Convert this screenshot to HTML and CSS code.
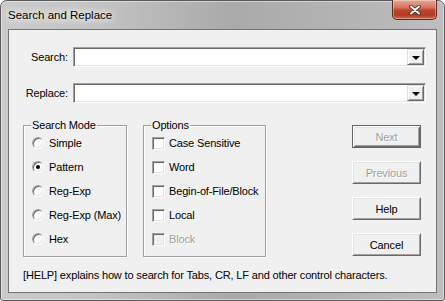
FILE: index.html
```html
<!DOCTYPE html>
<html lang="en">
<head>
    <meta charset="UTF-8">
    <title>Search and Replace</title>
    <link rel="stylesheet" href="styles.css">
</head>
<body>

    <div class="window">
        <!-- Title bar -->
        <div class="titlebar">
            <span class="title">Search and Replace</span>
            <button class="close-btn" aria-label="Close">
                <svg width="12" height="10" viewBox="0 0 12 10">
                    <path d="M2 1.5 L10 8.5 M10 1.5 L2 8.5" stroke="#3a2a2a" stroke-width="3.6" stroke-linecap="round" fill="none"/>
                    <path d="M2 1.5 L10 8.5 M10 1.5 L2 8.5" stroke="#fff" stroke-width="2" stroke-linecap="round" fill="none"/>
                </svg>
            </button>
        </div>

        <div class="client">
            <!-- Search / Replace fields -->
            <div class="field-row">
                <label class="field-label">Search:</label>
                <div class="combo"><span class="combo-arrow"><span class="tri"></span></span></div>
            </div>
            <div class="field-row">
                <label class="field-label">Replace:</label>
                <div class="combo"><span class="combo-arrow"><span class="tri"></span></span></div>
            </div>

            <div class="lower">
                <fieldset class="group group-mode">
                    <legend>Search Mode</legend>
                    <div class="option-list">
                        <div class="option"><span class="radio"></span>Simple</div>
                        <div class="option"><span class="radio checked"></span>Pattern</div>
                        <div class="option"><span class="radio"></span>Reg-Exp</div>
                        <div class="option"><span class="radio"></span>Reg-Exp (Max)</div>
                        <div class="option"><span class="radio"></span>Hex</div>
                    </div>
                </fieldset>

                <fieldset class="group group-options">
                    <legend>Options</legend>
                    <div class="option-list">
                        <div class="option"><span class="check"></span>Case Sensitive</div>
                        <div class="option"><span class="check"></span>Word</div>
                        <div class="option"><span class="check"></span>Begin-of-File/Block</div>
                        <div class="option"><span class="check"></span>Local</div>
                        <div class="option disabled"><span class="check"></span>Block</div>
                    </div>
                </fieldset>

                <div class="actions">
                    <button class="btn default" disabled>Next</button>
                    <button class="btn" disabled>Previous</button>
                    <button class="btn">Help</button>
                    <button class="btn">Cancel</button>
                </div>
            </div>

            <p class="hint">[HELP] explains how to search for Tabs, CR, LF and other control characters.</p>
        </div>
    </div>

</body>
</html>
```

FILE: styles.css
```css
/* Page */
body {
    margin: 0;
    font-family: "Liberation Sans", Arial, sans-serif;
    font-size: 11px;
    letter-spacing: -0.15px;
    color: #000;
}

/* Window frame */
.window {
    width: 445px;
    height: 301px;
    box-sizing: border-box;
    border: 1px solid #5a5a5a;
    border-radius: 7px 7px 3px 3px;
    padding: 0 7px 7px 7px;
    background: linear-gradient(90deg, #cacaca 0%, #c3c3c3 22%, #aaaaaa 52%, #b3b3b3 76%, #bebebe 100%);
    box-shadow: inset 0 0 0 1px rgba(255, 255, 255, 0.45);
}

.titlebar {
    height: 28px;
    display: flex;
    justify-content: space-between;
    align-items: flex-start;
}

.title {
    margin-top: 7px;
    font-size: 11.5px;
    letter-spacing: 0;
    line-height: 14px;
    color: #000;
    text-shadow: 0 0 6px #fff, 0 0 10px #fff, 0 0 14px rgba(255, 255, 255, 0.8);
}

.close-btn {
    width: 45px;
    height: 20px;
    margin-top: -1px;
    padding: 0;
    border: 1px solid #5b2a22;
    border-top: none;
    border-radius: 0 0 5px 5px;
    background: linear-gradient(#e4a897 0%, #d7735d 40%, #c0452d 52%, #b53a22 80%, #cf6a4f 100%);
    box-shadow: inset 0 0 0 1px rgba(255, 255, 255, 0.35);
    display: flex;
    align-items: center;
    justify-content: center;
}

/* Client area */
.client {
    height: 264px;
    box-sizing: border-box;
    border: 1px solid #737373;
    background-color: #f0f0f0;
    padding: 17px 10px 0 0;
}

/* Search / Replace rows */
.field-row {
    display: flex;
    align-items: center;
    gap: 5px;
    margin-bottom: 16px;
}

.field-label {
    width: 59px;
    text-align: right;
}

.combo {
    width: 354px;
    height: 20px;
    box-sizing: border-box;
    padding: 1px;
    border: 1px solid;
    border-color: #a0a0a0 #ffffff #ffffff #a0a0a0;
    box-shadow: inset 1px 1px #696969, inset -1px -1px #e3e3e3;
    background-color: #fff;
    display: flex;
    justify-content: flex-end;
}

.combo-arrow {
    width: 17px;
    height: 16px;
    box-sizing: border-box;
    border: 1px solid;
    border-color: #e3e3e3 #696969 #696969 #e3e3e3;
    box-shadow: inset 1px 1px #fff, inset -1px -1px #a0a0a0;
    background-color: #f0f0f0;
    display: flex;
    align-items: center;
    justify-content: center;
}

.tri {
    width: 0;
    height: 0;
    margin-top: 1px;
    border-left: 4px solid transparent;
    border-right: 4px solid transparent;
    border-top: 4px solid #000;
}

/* Group boxes */
.lower {
    display: flex;
    align-items: flex-start;
    margin: 1px 5px 0 14px;
}

.group {
    margin: 0;
    padding: 0 0 5px 8px;
    box-sizing: border-box;
    min-inline-size: 0;
    border: 1px solid #a0a0a0;
    box-shadow: 1px 1px 0 #fff, inset 1px 1px 0 #fff;
}

.group legend {
    padding: 0 1px;
    margin-left: -1px;
    line-height: 13px;
    background-color: #f0f0f0;
}

.group-mode {
    width: 104px;
}

.group-options {
    width: 123px;
    margin-left: 16px;
}

.option-list {
    margin-top: -1px;
}

.option {
    height: 24px;
    display: flex;
    align-items: center;
    white-space: nowrap;
}

.option.disabled {
    color: #a0a0a0;
    text-shadow: 1px 1px 0 #fff;
}

.radio {
    width: 12px;
    height: 12px;
    box-sizing: border-box;
    margin-right: 5px;
    border-radius: 50%;
    border: 1px solid;
    border-color: #a0a0a0 #ffffff #ffffff #a0a0a0;
    box-shadow: inset 1px 1px #696969, inset -1px -1px #e3e3e3;
    background-color: #fff;
    display: flex;
    align-items: center;
    justify-content: center;
}

.radio.checked::after {
    content: "";
    width: 4px;
    height: 4px;
    border-radius: 50%;
    background-color: #000;
}

.check {
    width: 13px;
    height: 13px;
    box-sizing: border-box;
    margin-right: 4px;
    border: 1px solid;
    border-color: #a0a0a0 #ffffff #ffffff #a0a0a0;
    box-shadow: inset 1px 1px #696969, inset -1px -1px #e3e3e3;
    background-color: #fff;
}

.option.disabled .check {
    background-color: #f0f0f0;
}

/* Buttons */
.actions {
    margin-left: auto;
    padding-top: 6px;
    display: flex;
    flex-direction: column;
    gap: 13px;
}

.btn {
    width: 69px;
    height: 23px;
    padding: 0;
    font-family: "Liberation Sans", Arial, sans-serif;
    font-size: 11px;
    letter-spacing: -0.15px;
    color: #000;
    background-color: #f0f0f0;
    border: 1px solid;
    border-color: #ffffff #696969 #696969 #ffffff;
    box-shadow: inset 1px 1px #e3e3e3, inset -1px -1px #a0a0a0;
}

.btn:disabled {
    color: #a0a0a0;
    text-shadow: 1px 1px 0 #fff;
}

.btn.default {
    border: 1px solid #646464;
    box-shadow: inset 1px 1px #fff, inset -1px -1px #696969, inset 2px 2px #e3e3e3, inset -2px -2px #a0a0a0;
}

/* Footer hint */
.hint {
    margin: 12px 0 0 14px;
    line-height: 13px;
}
```
